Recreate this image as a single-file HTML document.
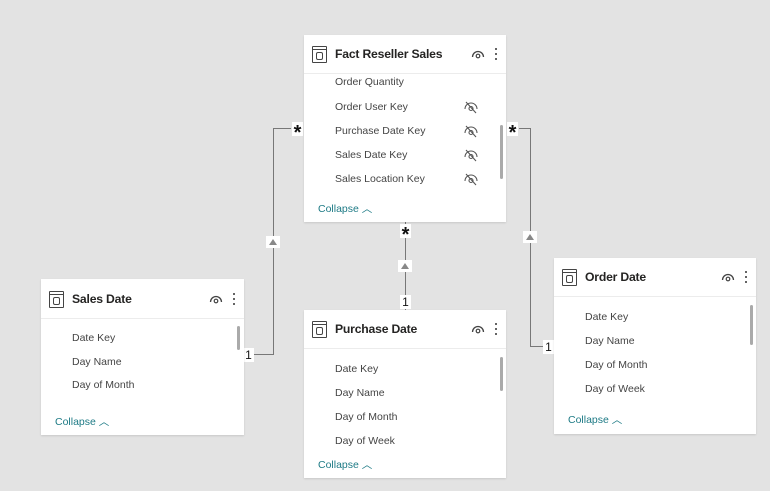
<!DOCTYPE html><html><head><style>
body{margin:0;width:770px;height:491px;background:#e3e3e3;position:relative;overflow:hidden;font-family:"Liberation Sans",sans-serif;}
.card{position:absolute;background:#fff;box-shadow:0 1px 2px rgba(0,0,0,.12);overflow:hidden}
.hd{position:absolute;left:0;right:0;top:0;border-bottom:1px solid #ececec}
.ti{position:absolute;left:31px;font-size:12.2px;font-weight:bold;color:#252423;letter-spacing:-.2px}
.ic{position:absolute;left:8px;width:15px;height:17px;border:1.5px solid #444;border-radius:1px;box-sizing:border-box}
.ic:before{content:"";position:absolute;left:0;right:0;top:2px;border-top:1.5px solid #444}
.ic:after{content:"";position:absolute;left:3px;top:5px;width:5px;height:6px;border:1.3px solid #444;border-radius:2px}
.eye{position:absolute}
.dots{position:absolute;width:3px}
.dots i{display:block;width:2px;height:2px;background:#333;margin-bottom:3px;border-radius:1px}
.r{position:absolute;left:31px;font-size:10.5px;color:#444;white-space:nowrap}
.col{position:absolute;left:14px;font-size:10.5px;color:#1d7a85}
.sb{position:absolute;width:3px;background:#aaa;border-radius:2px}
.hid{position:absolute;left:159px}
.ln{position:absolute;background:#777}
.lb{position:absolute;background:#fff;font-size:12px;color:#111;text-align:center;width:11px;height:14px;line-height:15px}
.st{font-size:20px;font-weight:bold;line-height:22px;height:14px;overflow:hidden}
.tri{position:absolute;width:14px;height:12px;background:#fff}
.tri:after{content:"";position:absolute;left:3px;top:3px;border-left:4px solid transparent;border-right:4px solid transparent;border-bottom:6px solid #888}
</style></head><body>
<svg width="0" height="0" style="position:absolute"><defs>
<symbol id="eye" viewBox="0 0 14 10"><path d="M1.5 8 A5.5 5.5 0 0 1 12.5 8" fill="none" stroke="#444" stroke-width="1.3"/><circle cx="7" cy="7" r="1.8" fill="none" stroke="#444" stroke-width="1.2"/></symbol>
<symbol id="eyes" viewBox="0 0 16 14"><path d="M2 9 A6 6 0 0 1 14 9" fill="none" stroke="#555" stroke-width="1.1"/><circle cx="8" cy="8.5" r="2" fill="none" stroke="#555" stroke-width="1.1"/><path d="M3 2 L13 13" stroke="#555" stroke-width="1.1"/></symbol>
</defs></svg>
<div class="ln" style="left:273px;top:128px;width:18px;height:1px"></div>
<div class="ln" style="left:273px;top:128px;width:1px;height:227px"></div>
<div class="ln" style="left:252px;top:354px;width:22px;height:1px"></div>
<div class="ln" style="left:519px;top:128px;width:12px;height:1px"></div>
<div class="ln" style="left:530px;top:128px;width:1px;height:219px"></div>
<div class="ln" style="left:530px;top:346px;width:20px;height:1px"></div>
<div class="ln" style="left:405px;top:222px;width:1px;height:88px"></div>
<div class="lb st" style="left:292px;top:122px">*</div>
<div class="lb st" style="left:507px;top:122px">*</div>
<div class="lb st" style="left:400px;top:224px">*</div>
<div class="lb" style="left:243px;top:348px">1</div>
<div class="lb" style="left:543px;top:340px">1</div>
<div class="lb" style="left:400px;top:295px">1</div>
<div class="tri" style="left:266px;top:236px"></div>
<div class="tri" style="left:523px;top:231px"></div>
<div class="tri" style="left:398px;top:260px"></div>

<div class="card" style="left:304px;top:35px;width:202px;height:187px">
<div style="position:absolute;left:0;right:0;top:39px;height:120px;overflow:hidden">
<div class="r" style="top:2px">Order Quantity</div>
</div>
<div class="hd" style="height:38px"></div>
<div class="ic" style="top:11px"></div><div class="ti" style="top:12px">Fact Reseller Sales</div>
<svg class="eye" style="left:167px;top:14px" width="14" height="10"><use href="#eye"/></svg><div class="dots" style="left:191px;top:13px"><i></i><i></i><i></i></div>
<div class="r" style="top:66px">Order User Key</div><svg class="hid" style="top:65px" width="16" height="14"><use href="#eyes"/></svg>
<div class="r" style="top:90px">Purchase Date Key</div><svg class="hid" style="top:89px" width="16" height="14"><use href="#eyes"/></svg>
<div class="r" style="top:114px">Sales Date Key</div><svg class="hid" style="top:113px" width="16" height="14"><use href="#eyes"/></svg>
<div class="r" style="top:138px">Sales Location Key</div><svg class="hid" style="top:137px" width="16" height="14"><use href="#eyes"/></svg>
<div class="sb" style="left:196px;top:90px;height:54px"></div>
<div class="col" style="top:166px">Collapse ︿</div>
</div>
<div class="card" style="left:41px;top:279px;width:203px;height:156px">
<div class="hd" style="height:39px"></div>
<div class="ic" style="top:12px"></div><div class="ti" style="top:13px">Sales Date</div>
<svg class="eye" style="left:168px;top:15px" width="14" height="10"><use href="#eye"/></svg><div class="dots" style="left:192px;top:14px"><i></i><i></i><i></i></div>
<div class="r" style="top:53px">Date Key</div>
<div class="r" style="top:77px">Day Name</div>
<div class="r" style="top:100px">Day of Month</div>
<div class="sb" style="left:196px;top:47px;height:24px"></div>
<div class="col" style="top:135px">Collapse ︿</div>
</div>
<div class="card" style="left:304px;top:310px;width:202px;height:168px">
<div class="hd" style="height:38px"></div>
<div class="ic" style="top:11px"></div><div class="ti" style="top:12px">Purchase Date</div>
<svg class="eye" style="left:167px;top:14px" width="14" height="10"><use href="#eye"/></svg><div class="dots" style="left:191px;top:13px"><i></i><i></i><i></i></div>
<div class="r" style="top:53px">Date Key</div>
<div class="r" style="top:77px">Day Name</div>
<div class="r" style="top:101px">Day of Month</div>
<div class="r" style="top:125px">Day of Week</div>
<div class="sb" style="left:196px;top:47px;height:34px"></div>
<div class="col" style="top:147px">Collapse ︿</div>
</div>
<div class="card" style="left:554px;top:258px;width:202px;height:176px">
<div class="hd" style="height:38px"></div>
<div class="ic" style="top:11px"></div><div class="ti" style="top:12px">Order Date</div>
<svg class="eye" style="left:167px;top:14px" width="14" height="10"><use href="#eye"/></svg><div class="dots" style="left:191px;top:13px"><i></i><i></i><i></i></div>
<div class="r" style="top:53px">Date Key</div>
<div class="r" style="top:77px">Day Name</div>
<div class="r" style="top:101px">Day of Month</div>
<div class="r" style="top:125px">Day of Week</div>
<div class="sb" style="left:196px;top:47px;height:40px"></div>
<div class="col" style="top:154px">Collapse ︿</div>
</div>
</body></html>
